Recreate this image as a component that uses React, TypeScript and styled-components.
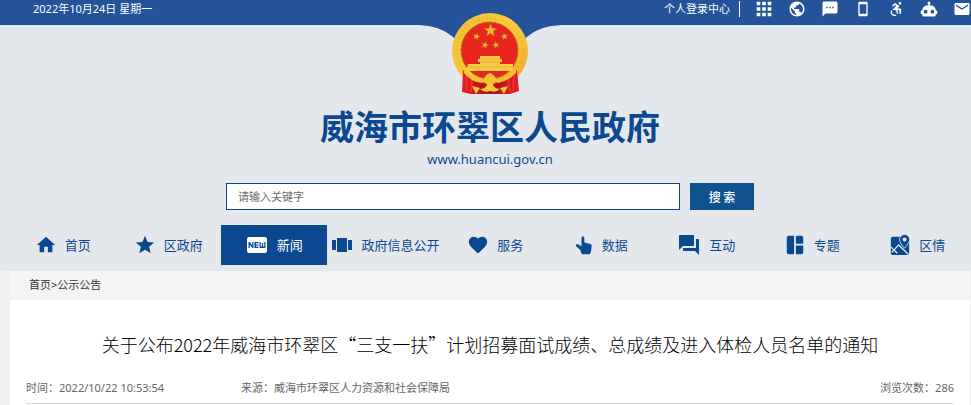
import React from "react";
import styled, { createGlobalStyle } from "styled-components";
import {
  MdApps,
  MdPublic,
  MdTextsms,
  MdSmartphone,
  MdEmail,
  MdHome,
  MdStar,
  MdFiberNew,
  MdViewCarousel,
  MdFavorite,
  MdForum,
} from "react-icons/md";

const GlobalStyle = createGlobalStyle`
  * { box-sizing: border-box; }
  body {
    margin: 0;
    background: #edf1f3;
    color: #333;
    font-family: "Noto Sans", "Noto Sans CJK SC", sans-serif;
    font-size: 11px;
    line-height: 16px;
  }
  a { color: inherit; text-decoration: none; }
  svg { display: block; }
`;

const navy = "#0b4890";

const Header = styled.header`
  background: #e4e8ed;
`;

const TopBar = styled.div`
  height: 25px;
  padding-left: 33px;
  background: #245399;
  color: #fff;
  display: flex;
  justify-content: space-between;
  align-items: flex-start;
`;

const DateText = styled.time`
  padding-top: 1px;
`;

const TopTools = styled.div`
  display: flex;
  align-items: flex-start;
`;

const LoginLink = styled.a`
  margin: 1px 15px 0 0;
  padding-right: 9px;
  border-right: 1px solid #fff;
`;

const IconLinks = styled.nav`
  display: flex;
  gap: 15px;
`;

const IconLink = styled.a<{ $size?: number }>`
  display: flex;
  align-items: center;
  justify-content: center;
  width: 18px;
  height: 17px;
  svg {
    flex: none;
    width: ${(p) => p.$size ?? 18}px;
    height: ${(p) => p.$size ?? 18}px;
  }
`;

const Container = styled.div`
  margin: 0 1px 0 10px;
`;

const Masthead = styled.div`
  position: relative;
  display: flex;
  flex-direction: column;
  align-items: center;
`;

const Hump = styled.svg`
  position: absolute;
  top: 0;
  left: 50%;
  margin-left: -76px;
`;

const EmblemArt = styled.svg`
  position: relative;
  margin-top: -12px;
`;

const SiteName = styled.h1`
  margin: 7px 0 0;
  color: ${navy};
  font: 700 34px/48px "Noto Sans CJK SC", sans-serif;
`;

const SiteUrl = styled.a`
  color: ${navy};
  font-size: 13px;
  line-height: 18px;
`;

const SearchForm = styled.form`
  display: flex;
  gap: 10px;
  width: 55%;
  margin-top: 15px;
`;

const SearchInput = styled.input`
  flex: 1;
  min-width: 0;
  height: 27px;
  padding: 0 11px;
  border: 1px solid ${navy};
  border-radius: 0;
  background: #fff;
  font: inherit;
  outline: none;
  &::placeholder { color: #6b6b6b; opacity: 1; }
`;

const SearchButton = styled.button`
  width: 64px;
  height: 27px;
  padding: 0;
  border: 0;
  background: #0f528f;
  color: #fff;
  font: 500 12px/18px "Noto Sans CJK SC", sans-serif;
`;

const MainNav = styled.nav`
  display: flex;
  padding: 15px 0 6px;
`;

const NavItem = styled.a<{ $active?: boolean; $size?: number }>`
  flex: 1 1 105px;
  height: 40px;
  padding: 0 3px;
  display: flex;
  align-items: center;
  justify-content: center;
  gap: 8px;
  white-space: nowrap;
  font-size: 13px;
  line-height: 20px;
  color: ${(p) => (p.$active ? "#fff" : navy)};
  background: ${(p) => (p.$active ? navy : "transparent")};
  svg {
    flex: none;
    width: ${(p) => p.$size ?? 22}px;
    height: ${(p) => p.$size ?? 22}px;
  }
`;

const Breadcrumb = styled.nav`
  height: 29px;
  padding: 6px 19px;
  background: #f4f4f4;
`;

const Article = styled.article`
  min-height: 105px;
  padding: 30px 16px 0;
  background: #fff;
`;

const Title = styled.h2`
  margin: 0;
  color: #000;
  font: 300 18px/28px "Noto Sans CJK SC", sans-serif;
  text-align: center;
  white-space: nowrap;
`;

const Meta = styled.div`
  display: flex;
  justify-content: space-between;
  margin-top: 22px;
  padding-bottom: 7px;
  border-bottom: 1px solid #d8d8d8;
  color: #666;
`;

const MetaGroup = styled.div`
  display: flex;
  gap: 77px;
`;

const Glyph = ({ d }: { d: string }) => (
  <svg viewBox="0 0 24 24" fill="currentColor" aria-hidden="true">
    <path fillRule="evenodd" d={d} />
  </svg>
);

const wheelchair =
  "M18.4,11.2L14.3,11.4L16.6,8.8C16.8,8.5 16.9,8 16.8,7.5C16.7,7.2 16.6,6.9 16.3,6.7L10.9,3.5C10.5,3.2 9.9,3.3 9.5,3.6L6.8,6.1C6.3,6.6 6.2,7.3 6.7,7.8C7.1,8.3 7.9,8.3 8.4,7.9L10.4,6.1L12.3,7.2L8.1,11.5C8,11.6 8,11.7 7.9,11.7C7.4,11.9 6.9,12.1 6.5,12.4L8,13.9C8.5,13.7 9,13.5 9.5,13.5C11.4,13.5 13,15.1 13,17C13,17.6 12.9,18.1 12.6,18.5L14.1,20C14.7,19.1 15,18.1 15,17C15,15.8 14.6,14.6 13.9,13.7L17.2,13.4L17,18.2C16.9,18.9 17.4,19.4 18.1,19.5H18.2C18.8,19.5 19.3,19 19.4,18.4L19.6,12.5C19.6,12.2 19.5,11.8 19.3,11.6C19,11.3 18.7,11.2 18.4,11.2M18,5.5A2,2 0 0,0 20,3.5A2,2 0 0,0 18,1.5A2,2 0 0,0 16,3.5A2,2 0 0,0 18,5.5M12.5,21.6C11.6,22.2 10.6,22.5 9.5,22.5C6.4,22.5 4,20.1 4,17C4,15.9 4.3,14.9 4.9,14L6.4,15.5C6.2,16 6,16.5 6,17C6,18.9 7.6,20.5 9.5,20.5C10.1,20.5 10.6,20.4 11,20.1L12.5,21.6Z";
const robot =
  "M12,2A2,2 0 0,1 14,4C14,4.74 13.6,5.39 13,5.73V7H14A7,7 0 0,1 21,14H22A1,1 0 0,1 23,15V18A1,1 0 0,1 22,19H21V20A2,2 0 0,1 19,22H5A2,2 0 0,1 3,20V19H2A1,1 0 0,1 1,18V15A1,1 0 0,1 2,14H3A7,7 0 0,1 10,7H11V5.73C10.4,5.39 10,4.74 10,4A2,2 0 0,1 12,2M7.5,13A2.5,2.5 0 0,0 5,15.5A2.5,2.5 0 0,0 7.5,18A2.5,2.5 0 0,0 10,15.5A2.5,2.5 0 0,0 7.5,13M16.5,13A2.5,2.5 0 0,0 14,15.5A2.5,2.5 0 0,0 16.5,18A2.5,2.5 0 0,0 19,15.5A2.5,2.5 0 0,0 16.5,13Z";
const pointer =
  "M9 3.5a1.7 1.7 0 0 1 3.4 0V9l7.2 1.800c1 .3 1.700 1.100 1.600 2.100L20.500 19.500 19 23H9.500L7.500 18 2.500 13.500 2.600 11.500 4 10.700 9 13.500Z";
const panels =
  "M3 4a2 2 0 0 1 2-2h6v20H5a2 2 0 0 1-2-2ZM13 2h6a2 2 0 0 1 2 2v6.500h-8ZM13 12.500h8V20a2 2 0 0 1-2 2h-6Z";

const MapGlyph = () => (
  <svg viewBox="0 0 24 24" aria-hidden="true">
    <rect x="2" y="3" width="20" height="20" rx="2" fill={navy} />
    <path d="M3 20 10.500 12 21 22 M2 14 9 21" stroke="#e4e8ed" strokeWidth="1.400" fill="none" />
    <path
      d="M17 .5A5.500 5.500 0 0 0 11.500 6C11.500 10 17 15.500 17 15.500S22.500 10 22.500 6A5.500 5.500 0 0 0 17 .5Z"
      fill={navy}
      stroke="#e4e8ed"
      strokeWidth="1"
    />
    <circle cx="17" cy="6" r="2.200" fill="#e4e8ed" />
  </svg>
);

const starPath = "M0-7 1.700-2.200 6.700-2.200 2.700.900 4.100 5.700 0 2.800-4.100 5.700-2.700.900-6.700-2.200-1.700-2.200Z";
const smallStars: [number, number, number][] = [
  [24.500, 23.500, 12],
  [52.500, 23.500, -12],
  [33, 32, 10],
  [44, 32, -10],
];

const Emblem = () => (
  <EmblemArt width="76" height="82" viewBox="0 0 76 82" role="img" aria-label="国徽">
    <defs>
      <linearGradient id="gold" x1="0" y1="0" x2="1" y2="1">
        <stop offset="0" stopColor="#f2bc36" />
        <stop offset=".5" stopColor="#fbcb3f" />
        <stop offset="1" stopColor="#e9a621" />
      </linearGradient>
      <linearGradient id="drape" x1="0" y1="0" x2="1" y2="0">
        <stop offset="0" stopColor="#e62122" />
        <stop offset=".5" stopColor="#a90f13" />
        <stop offset="1" stopColor="#e62122" />
      </linearGradient>
    </defs>
    <circle cx="38" cy="38" r="38" fill="url(#gold)" />
    <circle cx="38" cy="38" r="33" fill="none" stroke="#e3a82a" strokeWidth="3" strokeDasharray="1 3" opacity=".6" />
    <circle cx="37.500" cy="37.500" r="28.500" fill="#e8251f" stroke="#b97716" strokeWidth="1" />
    <g fill="#f4b62c" stroke="#a86410" strokeWidth=".4">
      <path d={starPath} transform="translate(38.500 17.500)" />
      {smallStars.map(([x, y, r]) => (
        <path key={`${x}-${y}`} d={starPath} transform={`translate(${x} ${y}) rotate(${r}) scale(.55)`} />
      ))}
    </g>
    <path d="M28 43h20v3h2v3H26v-3h2ZM28 49h20v3H28ZM16 51h45v7H14Z" fill="#f8ca43" />
    <path d="M26 46h24M28 49h20M16 54h45" stroke="#dda126" strokeWidth=".6" />
    <path d="M11 57Q19 68 33 70L38 74 43 70Q57 67 65 57L67 78 58 81H19L10 79Z" fill="url(#drape)" />
    <path d="M14 62 15 78M20 66 19 79M62 62 61 78M56 66 58 79" stroke="#ef302b" strokeWidth="2" />
    <path d="M12 56Q21 66 31 67Q34 61 38 60Q42 61 45 67Q55 66 64 56L64 60Q55 69 46 70Q41 66 38 69Q35 66 30 70Q19 69 12 60Z" fill="#f5bf38" />
    <path d="M20 73 28 75 24 81ZM56 73 48 75 52 81Z" fill="#f6c73e" />
    <path d="M28 76Q33 76 35 72Q38 69 41 72Q43 76 48 76Q44 80 38 78Q32 80 28 76Z" fill="#f6c73e" />
  </EmblemArt>
);

const tools = [
  { label: "应用", icon: <MdApps />, size: 22 },
  { label: "网站", icon: <MdPublic /> },
  { label: "消息", icon: <MdTextsms /> },
  { label: "手机版", icon: <MdSmartphone />, size: 16 },
  { label: "无障碍", icon: <Glyph d={wheelchair} />, size: 16 },
  { label: "机器人", icon: <Glyph d={robot} /> },
  { label: "邮箱", icon: <MdEmail /> },
];

const navItems = [
  { label: "首页", icon: <MdHome /> },
  { label: "区政府", icon: <MdStar /> },
  { label: "新闻", icon: <MdFiberNew />, active: true, size: 24 },
  { label: "政府信息公开", icon: <MdViewCarousel />, size: 24 },
  { label: "服务", icon: <MdFavorite /> },
  { label: "数据", icon: <Glyph d={pointer} />, size: 20 },
  { label: "互动", icon: <MdForum />, size: 24 },
  { label: "专题", icon: <Glyph d={panels} /> },
  { label: "区情", icon: <MapGlyph /> },
];

export default function App() {
  return (
    <>
      <GlobalStyle />
      <Header>
        <TopBar>
          <DateText dateTime="2022-10-24">2022年10月24日 星期一</DateText>
          <TopTools>
            <LoginLink href="#login">个人登录中心</LoginLink>
            <IconLinks>
              {tools.map((t) => (
                <IconLink key={t.label} href="#tool" aria-label={t.label} $size={t.size}>
                  {t.icon}
                </IconLink>
              ))}
            </IconLinks>
          </TopTools>
        </TopBar>
        <Container>
          <Masthead>
            <Hump width="152" height="20" viewBox="0 0 152 20" aria-hidden="true">
              <path d="M0 0C22 0 34 6 44 17H108C118 6 130 0 152 0Z" fill="#245399" />
            </Hump>
            <Emblem />
            <SiteName>威海市环翠区人民政府</SiteName>
            <SiteUrl href="#home">www.huancui.gov.cn</SiteUrl>
            <SearchForm onSubmit={(e) => e.preventDefault()}>
              <SearchInput type="text" aria-label="请输入关键字" placeholder="请输入关键字" />
              <SearchButton type="submit">搜 索</SearchButton>
            </SearchForm>
          </Masthead>
          <MainNav>
            {navItems.map((n) => (
              <NavItem key={n.label} href="#nav" $active={n.active} $size={n.size}>
                {n.icon}
                {n.label}
              </NavItem>
            ))}
          </MainNav>
        </Container>
      </Header>
      <Container as="main">
        <Breadcrumb>
          <a href="#home">首页</a>&gt;<a href="#notice">公示公告</a>
        </Breadcrumb>
        <Article>
          <Title>关于公布2022年威海市环翠区“三支一扶”计划招募面试成绩、总成绩及进入体检人员名单的通知</Title>
          <Meta>
            <MetaGroup>
              <span>时间：2022/10/22 10:53:54</span>
              <span>来源：威海市环翠区人力资源和社会保障局</span>
            </MetaGroup>
            <span>浏览次数：286</span>
          </Meta>
        </Article>
      </Container>
    </>
  );
}
